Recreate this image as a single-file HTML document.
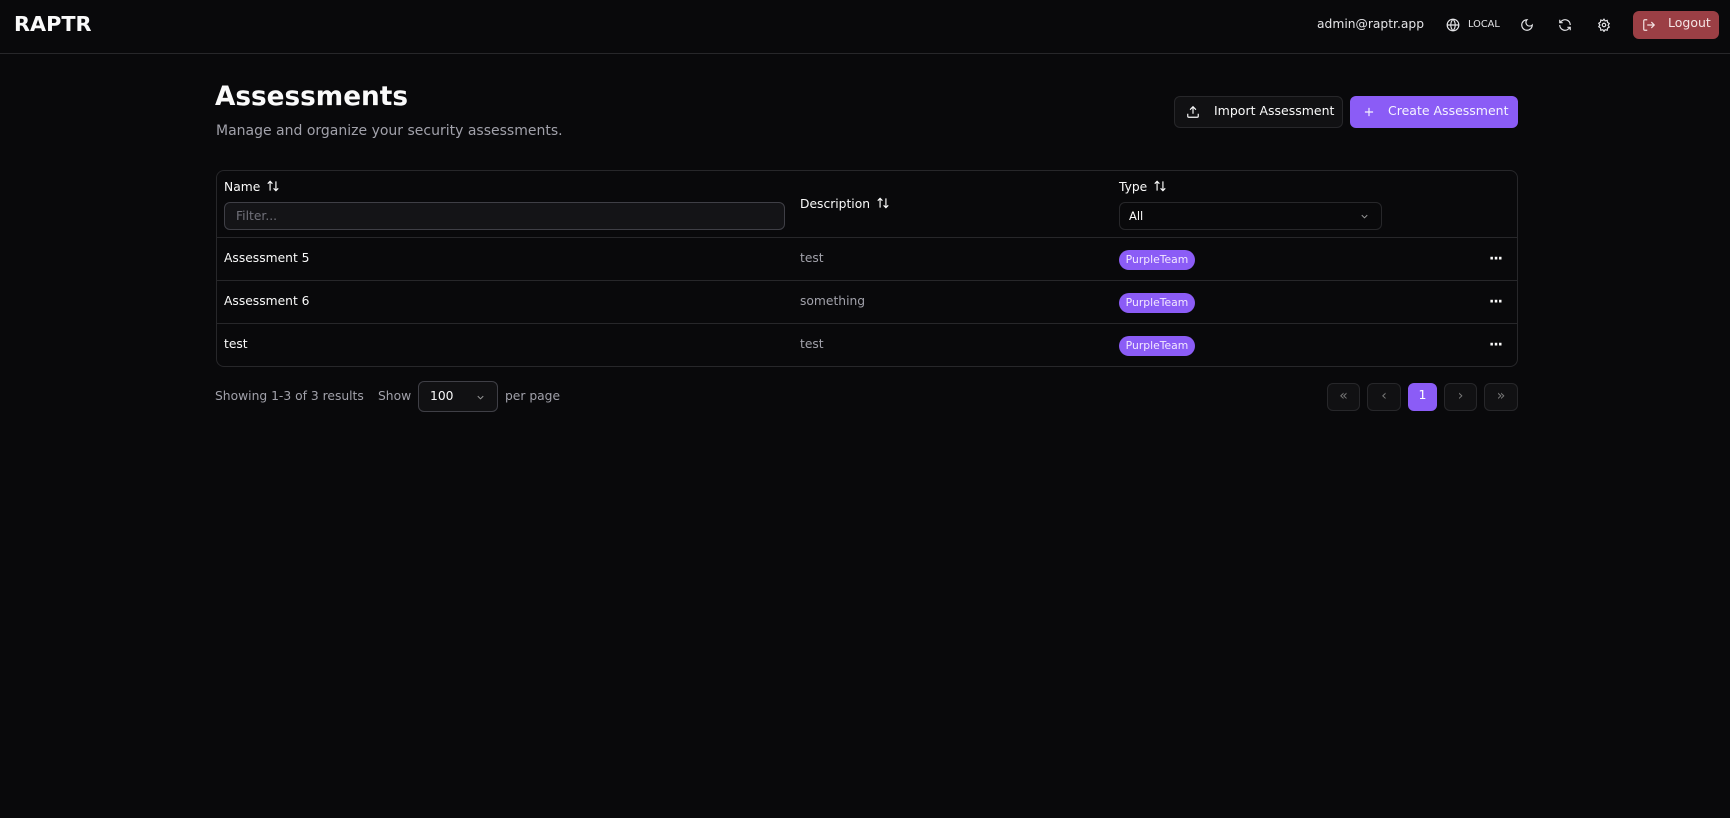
<!DOCTYPE html>
<html><head><meta charset="utf-8"><style>
*{box-sizing:border-box;margin:0;padding:0}
body{width:1730px;height:818px;background:#09090b;color:#fafafa;font-family:"DejaVu Sans","Liberation Sans",sans-serif;position:relative;overflow:hidden}
.a{position:absolute;white-space:nowrap}
.hdr{position:absolute;left:0;top:0;width:1730px;height:54px;border-bottom:1px solid #27272a}
.btn{position:absolute;border-radius:6px;display:flex;align-items:center;font-size:12.5px;white-space:nowrap}
.tbl{position:absolute;left:216px;top:170px;width:1302px;height:197px;border:1px solid #27272a;border-radius:8px}
.line{position:absolute;left:0;width:100%;height:1px;background:#27272a}
.badge{position:absolute;left:902px;width:76px;height:20px;border-radius:10px;background:#8b5cf6;font-size:10.8px;color:#f3e8ff;text-align:center;line-height:20px}
.dots{position:absolute;left:1272px;font-size:14px;font-weight:bold;letter-spacing:-1px}
.pg{position:absolute;top:383px;height:28px;border:1px solid #27272a;border-radius:6px;background:#111113;color:#777;font-size:14px;text-align:center;line-height:25px}
.t{font-size:12.3px}
.sort{display:inline-block;vertical-align:-2px;margin-left:6px}
svg{display:block}
</style></head><body>
<div class="hdr"></div>
<div class="a" style="left:14px;top:12px;font-size:20.8px;font-weight:bold">RAPTR</div>
<div class="a" style="left:1317px;top:17px;font-size:12.3px;color:#e4e4e7">admin@raptr.app</div>
<svg class="a" style="left:1446px;top:18px" width="14" height="14" viewBox="0 0 24 24" fill="none" stroke="#e4e4e7" stroke-width="2"><circle cx="12" cy="12" r="10"/><path d="M2 12h20M12 2a15 15 0 0 1 0 20M12 2a15 15 0 0 0 0 20"/></svg>
<div class="a" style="left:1468px;top:19px;font-size:9.8px;color:#e4e4e7">LOCAL</div>
<svg class="a" style="left:1520px;top:18px" width="14" height="14" viewBox="0 0 24 24" fill="none" stroke="#e4e4e7" stroke-width="2"><path d="M12 3a6 6 0 0 0 9 9 9 9 0 1 1-9-9z"/></svg>
<svg class="a" style="left:1558px;top:18px" width="14" height="14" viewBox="0 0 24 24" fill="none" stroke="#e4e4e7" stroke-width="2"><path d="M21 12a9 9 0 0 0-15-6.7L3 8M3 3v5h5M3 12a9 9 0 0 0 15 6.7l3-2.7M21 21v-5h-5"/></svg>
<svg class="a" style="left:1597px;top:18px" width="14" height="14" viewBox="0 0 24 24" fill="none" stroke="#e4e4e7" stroke-width="2"><circle cx="12" cy="12" r="3"/><path d="M12 2l2 3 3.5-1 .5 3.5 3 2-2 3 2 3-3 2-.5 3.5-3.5-1-2 3-2-3-3.5 1L6 17l-3-2 2-3-2-3 3-2 .5-3.5 3.5 1z"/></svg>
<div class="btn" style="left:1633px;top:11px;width:86px;height:28px;background:#9b3f45;color:#f5e5e5;align-items:flex-start"><svg style="margin-left:9px;margin-top:7px" width="14" height="14" viewBox="0 0 24 24" fill="none" stroke="#f5e5e5" stroke-width="2"><path d="M9 21H5a2 2 0 0 1-2-2V5a2 2 0 0 1 2-2h4M16 17l5-5-5-5M21 12H9"/></svg><span style="margin-left:12px;margin-top:4px">Logout</span></div>

<div class="a" style="left:215px;top:82px;font-size:26.3px;font-weight:bold">Assessments</div>
<div class="a" style="left:216px;top:123px;font-size:14px;color:#a1a1aa">Manage and organize your security assessments.</div>

<div class="btn" style="left:1174px;top:96px;width:169px;height:32px;border:1px solid #27272a;background:#111113;color:#fafafa"><svg style="margin-left:11px" width="14" height="14" viewBox="0 0 24 24" fill="none" stroke="#fafafa" stroke-width="2"><path d="M21 15v4a2 2 0 0 1-2 2H5a2 2 0 0 1-2-2v-4M17 8l-5-5-5 5M12 3v12"/></svg><span style="margin-left:14px;margin-top:-3px">Import Assessment</span></div>
<div class="btn" style="left:1350px;top:96px;width:168px;height:32px;background:#8b5cf6;color:#f5f3ff"><svg style="margin-left:12px" width="14" height="14" viewBox="0 0 24 24" fill="none" stroke="#f5f3ff" stroke-width="2"><path d="M12 5v14M5 12h14"/></svg><span style="margin-left:12px;margin-top:-3px">Create Assessment</span></div>

<div class="tbl">
 <div class="a t" style="left:7px;top:8px">Name<svg class="sort" width="14" height="14" viewBox="0 0 24 24" fill="none" stroke="#fafafa" stroke-width="2"><path d="M7 20V4M3 8l4-4 4 4M17 4v16M13 16l4 4 4-4"/></svg></div>
 <div class="a" style="left:7px;top:31px;width:561px;height:28px;border:1px solid #3f3f46;border-radius:6px;background:#141417;font-size:12.3px;color:#71717a;padding:6px 11px">Filter...</div>
 <div class="a t" style="left:583px;top:25px">Description<svg class="sort" width="14" height="14" viewBox="0 0 24 24" fill="none" stroke="#fafafa" stroke-width="2"><path d="M7 20V4M3 8l4-4 4 4M17 4v16M13 16l4 4 4-4"/></svg></div>
 <div class="a t" style="left:902px;top:8px">Type<svg class="sort" width="14" height="14" viewBox="0 0 24 24" fill="none" stroke="#fafafa" stroke-width="2"><path d="M7 20V4M3 8l4-4 4 4M17 4v16M13 16l4 4 4-4"/></svg></div>
 <div class="a" style="left:902px;top:31px;width:263px;height:28px;border:1px solid #27272a;border-radius:6px;font-size:11.5px;padding:6px 9px">All<svg style="position:absolute;right:11px;top:8px" width="11" height="11" viewBox="0 0 24 24" fill="none" stroke="#999" stroke-width="2"><path d="M6 9l6 6 6-6"/></svg></div>
 <div class="line" style="top:66px"></div>
 <div class="line" style="top:109px"></div>
 <div class="line" style="top:152px"></div>
 <div class="a t" style="left:7px;top:80px">Assessment 5</div>
 <div class="a t" style="left:583px;top:80px;color:#a1a1aa">test</div>
 <div class="badge" style="top:79px">PurpleTeam</div><div class="dots" style="top:80px">···</div>
 <div class="a t" style="left:7px;top:123px">Assessment 6</div>
 <div class="a t" style="left:583px;top:123px;color:#a1a1aa">something</div>
 <div class="badge" style="top:122px">PurpleTeam</div><div class="dots" style="top:123px">···</div>
 <div class="a t" style="left:7px;top:166px">test</div>
 <div class="a t" style="left:583px;top:166px;color:#a1a1aa">test</div>
 <div class="badge" style="top:165px">PurpleTeam</div><div class="dots" style="top:166px">···</div>
</div>

<div class="a t" style="left:215px;top:389px;color:#a1a1aa">Showing 1-3 of 3 results</div>
<div class="a t" style="left:378px;top:389px;color:#a1a1aa">Show</div>
<div class="a" style="left:418px;top:381px;width:80px;height:31px;border:1px solid #3f3f46;border-radius:6px;background:#111113;font-size:12.3px;padding:7px 11px">100<svg style="position:absolute;right:11px;top:10px" width="11" height="11" viewBox="0 0 24 24" fill="none" stroke="#999" stroke-width="2"><path d="M6 9l6 6 6-6"/></svg></div>
<div class="a t" style="left:505px;top:389px;color:#a1a1aa">per page</div>

<div class="pg" style="left:1327px;width:33px">«</div>
<div class="pg" style="left:1367px;width:34px">‹</div>
<div class="pg" style="left:1408px;width:29px;background:#8b5cf6;border-color:#8b5cf6;color:#fff;font-size:12.5px;line-height:22px">1</div>
<div class="pg" style="left:1444px;width:33px">›</div>
<div class="pg" style="left:1484px;width:34px">»</div>
</body></html>
